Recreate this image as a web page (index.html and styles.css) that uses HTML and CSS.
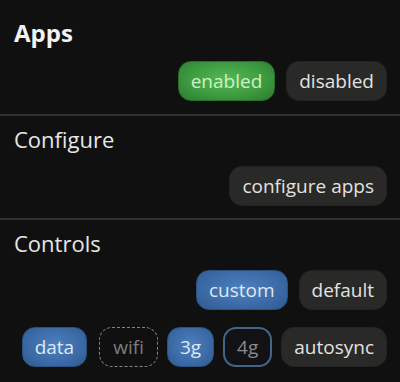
FILE: index.html
```html
<!DOCTYPE html>
<html>
<head>
<meta charset="utf-8">
<link rel="stylesheet" href="styles.css">
</head>
<body>
<div class="page">
  <section class="section first">
    <h1 class="title bold">Apps</h1>
    <div class="row">
      <span class="btn green">enabled</span>
      <span class="btn grey">disabled</span>
    </div>
  </section>
  <div class="divider"></div>
  <section class="section">
    <h2 class="title">Configure</h2>
    <div class="row">
      <span class="btn grey">configure apps</span>
    </div>
  </section>
  <div class="divider"></div>
  <section class="section">
    <h2 class="title">Controls</h2>
    <div class="row">
      <span class="btn blue">custom</span>
      <span class="btn grey">default</span>
    </div>
    <div class="row second">
      <span class="btn blue">data</span>
      <span class="btn dashed">wifi</span>
      <span class="btn blue">3g</span>
      <span class="btn outline">4g</span>
      <span class="btn grey">autosync</span>
    </div>
  </section>
</div>
</body>
</html>
```
FILE: styles.css
```css
html, body {
  margin: 0;
  padding: 0;
  background: #111011;
}
body {
  font-family: "Open Sans", "Noto Sans", sans-serif;
  width: 400px;
  height: 382px;
  overflow: hidden;
}
.section {
  padding: 9px 13px 12px 14px;
}
.section.first {
  padding-top: 18px;
  padding-bottom: 13px;
}
.title {
  margin: 0;
  font-size: 22px;
  line-height: 28px;
  font-weight: 400;
  color: #e6e6e6;
}
.title.bold {
  font-size: 24px;
  line-height: 30px;
  font-weight: 700;
  color: #f2f2f2;
}
.row {
  display: flex;
  justify-content: flex-end;
  gap: 11px;
  margin-top: 13px;
}
.row.second {
  margin-top: 17px;
  gap: 9px;
}
.btn {
  box-sizing: border-box;
  height: 40px;
  line-height: 38px;
  padding: 0 12px;
  border-radius: 13px;
  font-size: 19px;
  border: 1px solid transparent;
  white-space: nowrap;
}
.green {
  background: radial-gradient(ellipse at 50% 45%, #55b855 0%, #3e9c40 55%, #2c7a2f 100%);
  border-color: #2a6e2c;
  color: #cdf2c6;
}
.grey {
  background: #292927;
  border-color: #242422;
  color: #e2e2e0;
}
.blue {
  background: radial-gradient(ellipse at 50% 45%, #4c80bf 0%, #3d6ca8 55%, #2f5a90 100%);
  border-color: #2c5283;
  color: #dfe8f3;
}
.dashed {
  background: transparent;
  border: 1.5px dashed #85857c;
  color: #7c7c78;
  padding: 0 13px;
  margin-left: 3px;
}
.outline {
  background: #121214;
  border: 2px solid #45648a;
  color: #8a8a8a;
  padding: 0 12px;
  line-height: 36px;
}
.divider {
  height: 2px;
  background: #2f2f2f;
}
```
